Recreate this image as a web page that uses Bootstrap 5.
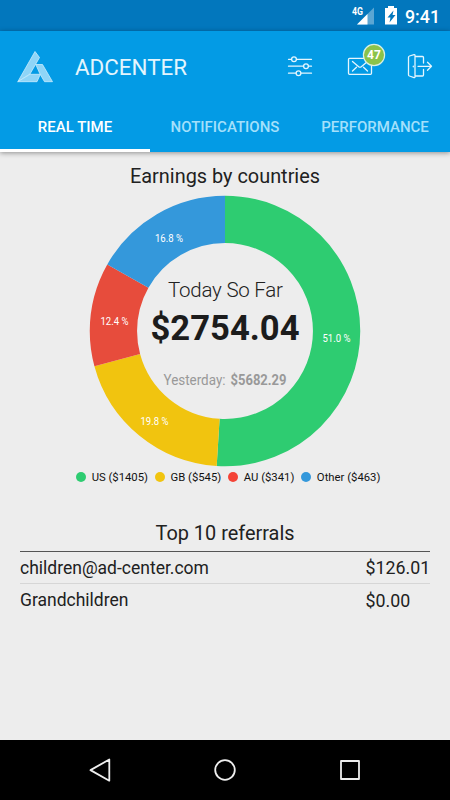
<!DOCTYPE html>
<html lang="en">
<head>
<meta charset="utf-8">
<meta name="viewport" content="width=device-width, initial-scale=1">
<title>AdCenter</title>
<link rel="stylesheet" href="https://cdn.jsdelivr.net/npm/bootstrap@5.3.0/dist/css/bootstrap.min.css">
<style>
body{font-family:Roboto,sans-serif;background:#ededed;color:#212121;height:800px;overflow:hidden}
svg{display:block;flex:none}
.status-bar{height:31px;background:#0277bd;padding-right:11px}
.clock{font-size:17.8px;line-height:33px;font-weight:500;width:34px;white-space:nowrap}
.app-header{height:121px;background:#039be5;box-shadow:0 1px 5px rgba(0,0,0,.4);z-index:1}
.app-bar{height:72px;padding-left:15px;padding-right:17px}
.brand{font-size:22.4px;line-height:72px;color:#e4f5fd;margin-left:20px}
.tabs{height:49px}
.tabs .nav-link{width:150px;height:49px;padding:0;line-height:48px;font-size:15px;font-weight:500;color:#a4e0fb;border-bottom:3px solid transparent;border-radius:0;white-space:nowrap}
.tabs .nav-link.active{color:#fff;border-color:#fff}
.heading{font-size:19.9px;line-height:26px;font-weight:400}
.earnings{padding-top:12px}
.chart{margin-top:-2px}
.legend{height:21px;font-size:11.3px;line-height:17px;color:#111;padding-left:6px}
.dot{width:10px;height:10px;margin-right:6px;margin-bottom:1px}
.legend-label{margin-right:6.5px}
.referrals{margin:33px 20px 0}
.referrals .heading{height:30px}
.ref-list{border-top:1px solid #555}
.ref-row{height:31px;font-size:17.5px;line-height:32px}
.ref-row+.ref-row{border-top:1px solid #d6d6d6;height:34px;line-height:33px}
.amount{width:64.5px;font-size:17.8px}
.system-nav{height:60px;background:#000}
</style>
<script src="https://cdn.jsdelivr.net/npm/bootstrap@5.3.0/dist/js/bootstrap.bundle.min.js"></script>
</head>
<body class="d-flex flex-column">
<div class="status-bar d-flex justify-content-end text-white">
  <svg width="56" height="31" viewBox="349 0 56 31">
    <text x="352" y="15" font-size="10" font-weight="700" fill="#fff" textLength="11" lengthAdjust="spacingAndGlyphs">4G</text>
    <path d="M374 7.500V24.500H357Z" fill="#5ba6d3"/><path d="M367.500 14V24.500H357Z" fill="#fff"/>
    <path d="M388 6h6v2h3v16.500h-12V8h3z" fill="#fff"/><path d="M393.500 10.500l-6 7h3l-1 5 6-7.500h-3z" fill="#0277bd"/>
  </svg>
  <span class="clock">9:41</span>
</div>
<header class="app-header position-relative flex-shrink-0">
  <div class="app-bar d-flex align-items-center">
    <svg width="40" height="72" viewBox="15 31 40 72">
      <g fill="#8fd5f7" stroke="#c9ecfc" stroke-width=".8" stroke-linejoin="round">
        <path d="M35 51.500L39.500 57.500L30 74L17.800 81.700Z"/>
        <path d="M30 74.300H40.300L37 81.700H17.800Z"/>
        <path d="M35.800 64.500H42.500L52.500 81.700H44.500L40 74Z"/>
      </g>
    </svg>
    <span class="brand">ADCENTER</span>
    <svg class="ms-auto" width="148" height="72" viewBox="285 31 148 72">
      <g fill="none" stroke="#e5f6fe" stroke-width="1.300" stroke-linecap="round" stroke-linejoin="round">
        <path d="M288.500 59.300h3M296.500 59.300h15M288.500 66.200h15M308.500 66.200h3M288.500 73.200h7.500M301 73.200h10.500"/>
        <circle cx="294" cy="59.300" r="2.400"/><circle cx="306" cy="66.200" r="2.400"/><circle cx="298.500" cy="73.200" r="2.400"/>
        <rect x="348.500" y="58.300" width="23" height="16" rx="1"/>
        <path d="M352.500 61.500l6.200 5.200q1.300 1 2.600 0l6.200-5.200M352.500 71l4-3.700M367.500 71l-4-3.700"/>
        <path d="M415 56.500h7.500q1 0 1 1V63M423.500 69.500v5.500q0 1-1 1H415M409.500 56l4.500-1.300q1-.2 1 .8v21.300q0 1-1 .8l-4.500-1.600q-1-.4-1-1.300V57.300q0-1 1-1.300zM413.300 66.200v.600M418 66.300h13.500M427.500 62.300l4 4-4 4"/>
      </g>
      <circle cx="374" cy="55" r="10.600" fill="#8bc34a" stroke="#d9f0e4" stroke-width="1.200"/>
      <text x="374" y="59.200" text-anchor="middle" font-size="12" font-weight="700" fill="#fff">47</text>
    </svg>
  </div>
  <nav class="tabs nav flex-nowrap text-center">
    <a class="nav-link active" href="#">REAL TIME</a>
    <a class="nav-link" href="#">NOTIFICATIONS</a>
    <a class="nav-link" href="#">PERFORMANCE</a>
  </nav>
</header>
<main class="flex-grow-1">
  <section class="earnings">
    <h1 class="heading text-center mb-0">Earnings by countries</h1>
    <svg class="chart mx-auto" width="280" height="279" viewBox="85 188 280 279">
      <g fill="none" stroke-width="47.300" transform="rotate(-90 225 331)">
        <circle cx="225" cy="331" r="111.600" pathLength="100" stroke="#2ecc71" stroke-dasharray="51 49"/>
        <circle cx="225" cy="331" r="111.600" pathLength="100" stroke="#f1c40f" stroke-dasharray="19.800 80.200" stroke-dashoffset="-51"/>
        <circle cx="225" cy="331" r="111.600" pathLength="100" stroke="#e74c3c" stroke-dasharray="12.400 87.600" stroke-dashoffset="-70.800"/>
        <circle cx="225" cy="331" r="111.600" pathLength="100" stroke="#3498db" stroke-dasharray="16.800 83.200" stroke-dashoffset="-83.200"/>
      </g>
      <g fill="#fff" font-size="10.300">
        <text x="155" y="242" textLength="28" lengthAdjust="spacingAndGlyphs">16.8 %</text>
        <text x="322.500" y="342" textLength="28" lengthAdjust="spacingAndGlyphs">51.0 %</text>
        <text x="100.500" y="324.500" textLength="28" lengthAdjust="spacingAndGlyphs">12.4 %</text>
        <text x="140.500" y="425" textLength="28" lengthAdjust="spacingAndGlyphs">19.8 %</text>
      </g>
      <text x="168" y="297" font-size="20.500" font-weight="300" fill="#212121" textLength="115">Today So Far</text>
      <text x="150.500" y="340" font-size="35.500" font-weight="700" fill="#1c1c1c" textLength="149" lengthAdjust="spacingAndGlyphs">$2754.04</text>
      <g fill="#999" font-size="15.500">
        <text x="163.500" y="385.400" textLength="62" lengthAdjust="spacingAndGlyphs">Yesterday:</text>
        <text x="230.500" y="385.400" font-weight="700" textLength="56" lengthAdjust="spacingAndGlyphs">$5682.29</text>
      </g>
    </svg>
    <div class="legend d-flex justify-content-center align-items-center">
      <svg class="dot"><circle cx="5" cy="5" r="5" fill="#2ecc71"/></svg><span class="legend-label">US ($1405)</span>
      <svg class="dot"><circle cx="5" cy="5" r="5" fill="#f1c40f"/></svg><span class="legend-label">GB ($545)</span>
      <svg class="dot"><circle cx="5" cy="5" r="5" fill="#f44336"/></svg><span class="legend-label">AU ($341)</span>
      <svg class="dot"><circle cx="5" cy="5" r="5" fill="#3498db"/></svg><span>Other ($463)</span>
    </div>
  </section>
  <section class="referrals">
    <h2 class="heading text-center mb-0">Top 10 referrals</h2>
    <div class="ref-list">
      <div class="ref-row d-flex justify-content-between"><span>children@ad-center.com</span><span class="amount">$126.01</span></div>
      <div class="ref-row d-flex justify-content-between"><span>Grandchildren</span><span class="amount">$0.00</span></div>
    </div>
  </section>
</main>
<footer class="system-nav flex-shrink-0 d-flex justify-content-center">
  <svg width="280" height="60" viewBox="85 740 280 60" fill="none" stroke="#eee" stroke-width="1.800" stroke-linejoin="round">
    <path d="M109.300 759.500V780.700L90.500 770.100Z"/><circle cx="225" cy="770" r="9.800"/><rect x="341" y="761" width="18" height="18"/>
  </svg>
</footer>
</body>
</html>
